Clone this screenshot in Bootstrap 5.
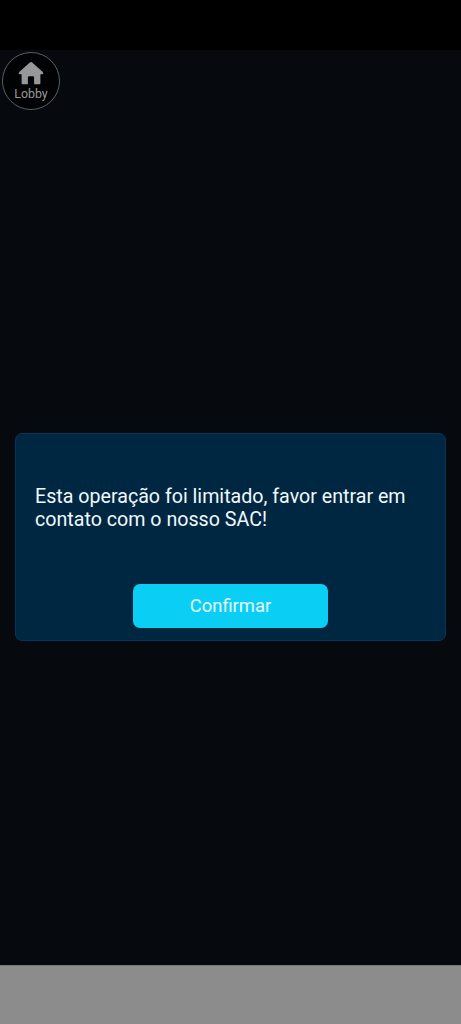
<!DOCTYPE html>
<html lang="pt-BR">
<head>
<meta charset="utf-8">
<meta name="viewport" content="width=device-width, initial-scale=1">
<title>Lobby</title>
<link href="https://cdn.jsdelivr.net/npm/bootstrap@5.3.0/dist/css/bootstrap.min.css" rel="stylesheet">
<style>
body { font-family: Roboto, "Liberation Sans", sans-serif; background: #060a0f; }
.status-strip { height: 50px; background: #000; }
.bottom-strip { height: 59px; background: #8c8c8c; border-top: 1px solid #777; }
.lobby-btn { width: 58px; height: 58px; margin: 2px 0 0 2px; padding: 9px 0 0; background: #010203; border: 1px solid #5c5e60; color: #96989a; font-size: 12.4px; line-height: 15px; }
.lobby-btn svg { display: block; margin-bottom: 1px; }
.dialog-box { height: 208px; margin: 323px 15px 0; padding: 51px 19px 12px; background: #002742; border: 1px solid #04365a; border-radius: 7px; color: #f1f8fc; }
.dialog-text { font-size: 19.65px; line-height: 23.4px; white-space: nowrap; }
.confirm-btn, .confirm-btn:hover { width: 195px; height: 44px; background: #0acef4; color: #e6fcff; border: 0; border-radius: 7px; font-size: 18.4px; line-height: 22px; padding: 0; }
</style>
</head>
<body>
<div class="vh-100 d-flex flex-column overflow-hidden">
  <header class="status-strip flex-shrink-0"></header>
  <main class="flex-grow-1">
    <button type="button" class="lobby-btn rounded-circle d-flex flex-column align-items-center">
      <svg width="26" height="23" viewBox="0 0 26 23" fill="#96989a" aria-hidden="true"><path d="M11.8.5Q13-.4 14.2.5L24.8 10Q26 12 24 12.3H22.4V21.3Q22.4 22.3 21.4 22.3H16.1V15.5Q16.1 14.3 14.9 14.3H11.1Q9.9 14.3 9.9 15.5V22.3H4.6Q3.6 22.3 3.6 21.3V12.3H2Q0 12 1.2 10Z"/></svg>
      <span>Lobby</span>
    </button>
    <section class="dialog-box d-flex flex-column justify-content-between align-items-center" role="dialog">
      <p class="dialog-text mb-0 w-100">Esta operação foi limitado, favor entrar em<br>contato com o nosso SAC!</p>
      <button type="button" class="btn confirm-btn">Confirmar</button>
    </section>
  </main>
  <footer class="bottom-strip flex-shrink-0"></footer>
</div>
<script src="https://cdn.jsdelivr.net/npm/bootstrap@5.3.0/dist/js/bootstrap.bundle.min.js"></script>
</body>
</html>
